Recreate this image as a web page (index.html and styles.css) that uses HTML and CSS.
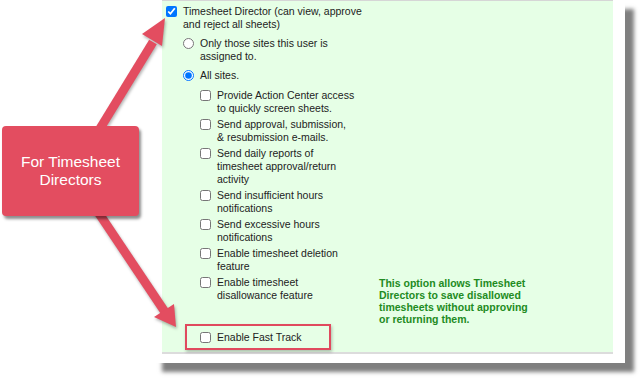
FILE: index.html
```html
<!DOCTYPE html>
<html lang="en">
<head>
    <meta charset="UTF-8">
    <meta name="viewport" content="width=device-width, initial-scale=1.0">
    <title>Timesheet Director</title>
    <link rel="stylesheet" href="styles.css">
</head>
<body>

    <div class="page">

        <!-- Permissions screenshot -->
        <div class="sheet">
            <div class="panel">
                <label class="opt"><input type="checkbox" checked><span>Timesheet Director (can view, approve<br>and reject all sheets)</span></label>
                <div class="level">
                    <label class="opt"><input type="radio" name="sites"><span>Only those sites this user is<br>assigned to.</span></label>
                    <label class="opt"><input type="radio" name="sites" checked><span>All sites.</span></label>
                    <div class="level perms">
                        <label class="opt"><input type="checkbox"><span>Provide Action Center access<br>to quickly screen sheets.</span></label>
                        <label class="opt"><input type="checkbox"><span>Send approval, submission,<br>&amp; resubmission e-mails.</span></label>
                        <label class="opt"><input type="checkbox"><span>Send daily reports of<br>timesheet approval/return<br>activity</span></label>
                        <label class="opt"><input type="checkbox"><span>Send insufficient hours<br>notifications</span></label>
                        <label class="opt"><input type="checkbox"><span>Send excessive hours<br>notifications</span></label>
                        <label class="opt"><input type="checkbox"><span>Enable timesheet deletion<br>feature</span></label>
                        <div class="perm-row">
                            <label class="opt"><input type="checkbox"><span>Enable timesheet<br>disallowance feature</span></label>
                            <p class="hint">This option allows Timesheet<br>Directors to save disallowed<br>timesheets without approving<br>or returning them.</p>
                        </div>
                        <label class="opt fast-track"><input type="checkbox"><span>Enable Fast Track</span></label>
                    </div>
                </div>
            </div>
        </div>

        <!-- Annotations -->
        <svg class="arrows" width="644" height="383" viewBox="0 0 644 383">
            <line x1="93" y1="140" x2="153" y2="42" stroke="#e34d60" stroke-width="9"/>
            <polygon points="165,18 142,34 162,46" fill="#e34d60"/>
            <line x1="90" y1="200" x2="165" y2="312" stroke="#e34d60" stroke-width="9"/>
            <polygon points="176,327 154,317 174,304" fill="#e34d60"/>
        </svg>
        <div class="callout">For Timesheet<br>Directors</div>
        <div class="highlight"></div>

    </div>

</body>
</html>
```

FILE: styles.css
```css
body {
    margin: 0;
    font-family: "Liberation Sans", Arial, sans-serif;
}

.page {
    position: relative;
    width: 644px;
    height: 383px;
    overflow: hidden;
    background: #fff;
}

.sheet {
    margin-left: 153px;
    width: 472px;
    height: 363px;
    box-sizing: border-box;
    padding: 0 12px 9px 9px;
    background: #fff;
    box-shadow: 9px 9px 4px rgba(0, 0, 0, 0.5);
}

.panel {
    height: 100%;
    box-sizing: border-box;
    background: #e6ffe6;
    border-top: 1px solid #d6d6d6;
    border-bottom: 2px solid #dcdcdc;
    padding: 4px 4px 0;
    display: flex;
    flex-direction: column;
    gap: 6px;
    font-size: 10.5px;
    line-height: 13px;
    color: #222;
}

.opt {
    display: flex;
    align-items: flex-start;
    gap: 6px;
    white-space: nowrap;
}

.opt input {
    width: 11px;
    height: 11px;
    margin: 1px 0 0;
    flex: none;
}

.level {
    margin-left: 17px;
    display: flex;
    flex-direction: column;
    gap: 6px;
}

.perms {
    margin-top: 1px;
    gap: 3px;
}

.perm-row {
    display: grid;
    grid-template-columns: 179px auto;
}

.hint {
    margin: 1px 0 0;
    font-weight: bold;
    color: #228b22;
    line-height: 12px;
    white-space: nowrap;
}

.fast-track {
    margin-top: 3px;
}

/* annotations drawn over the screenshot */
.arrows {
    position: absolute;
    left: 0;
    top: 0;
    pointer-events: none;
    filter: drop-shadow(1px 2px 1.5px rgba(0, 0, 0, 0.3));
}

.callout {
    position: absolute;
    left: 2px;
    top: 126px;
    width: 137px;
    height: 90px;
    display: flex;
    align-items: center;
    justify-content: center;
    text-align: center;
    background: #e34d60;
    border-radius: 4px;
    box-shadow: 2px 3px 3px rgba(0, 0, 0, 0.45);
    color: #fff;
    font-size: 15.5px;
    line-height: 18px;
}

.highlight {
    position: absolute;
    left: 185px;
    top: 324px;
    width: 146px;
    height: 26px;
    box-sizing: border-box;
    border: 2px solid #e04a5e;
    box-shadow: 1px 2px 3px rgba(0, 0, 0, 0.25);
}
```
